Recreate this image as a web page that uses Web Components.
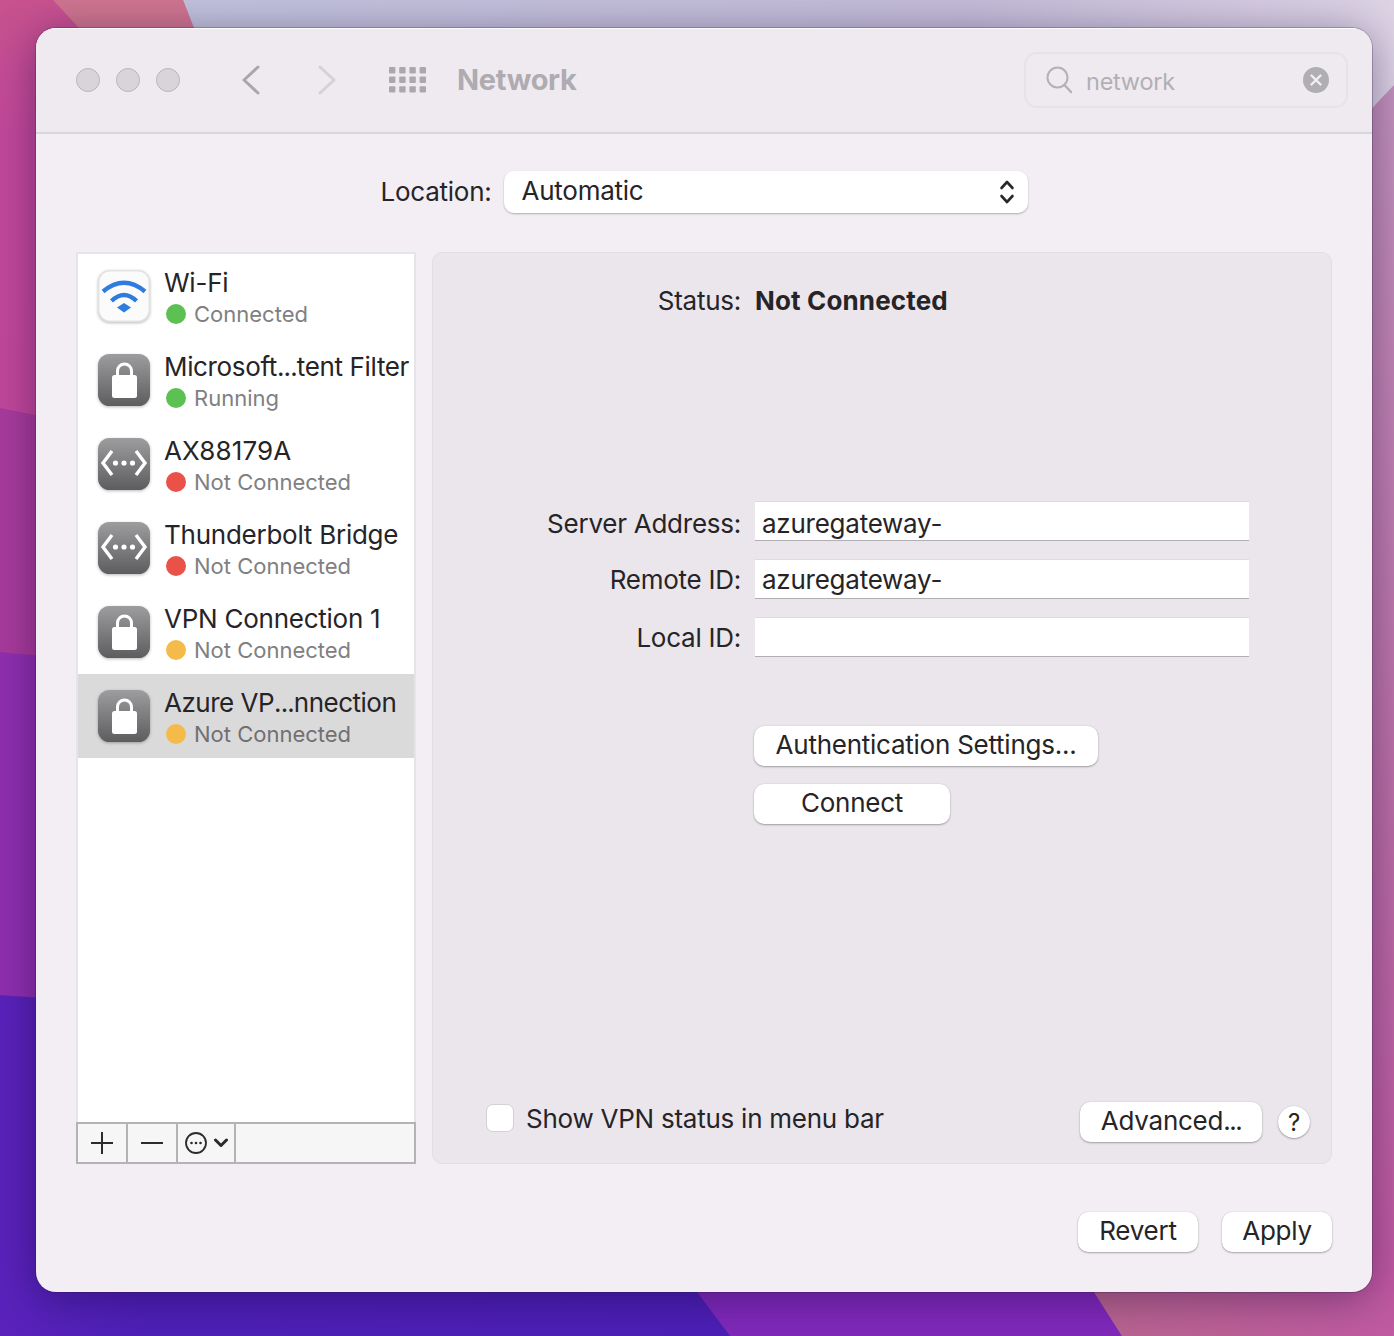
<!DOCTYPE html>
<html>
<head>
<meta charset="utf-8">
<title>Network</title>
<style>
  html, body { margin: 0; padding: 0; }
  body { font-family: Inter, "Liberation Sans", sans-serif; color: #262427; }
  .dots { letter-spacing: -.9px; }
</style>
</head>
<body>
<mac-desktop>
  <prefs-window>
    <prefs-toolbar slot="toolbar">Network</prefs-toolbar>
    <location-picker>Automatic</location-picker>
    <service-list slot="side">
      <service-row icon="wifi" tone="green">Wi-Fi<span slot="status">Connected</span></service-row>
      <service-row icon="lock" tone="green" style="letter-spacing:-.35px">Microsoft<span class="dots">...</span>tent Filter<span slot="status">Running</span></service-row>
      <service-row icon="net" tone="red" style="letter-spacing:.1px">AX88179A<span slot="status">Not Connected</span></service-row>
      <service-row icon="net" tone="red">Thunderbolt Bridge<span slot="status">Not Connected</span></service-row>
      <service-row icon="lock" tone="amber">VPN Connection 1<span slot="status">Not Connected</span></service-row>
      <service-row icon="lock" tone="amber" selected style="letter-spacing:-.5px">Azure VP<span class="dots">...</span>nnection<span slot="status">Not Connected</span></service-row>
    </service-list>
    <vpn-panel slot="main"></vpn-panel>
    <mac-button slot="actions" style="width:120px">Revert</mac-button>
    <mac-button slot="actions" style="width:110px">Apply</mac-button>
  </prefs-window>
</mac-desktop>

<script>
class MacDesktop extends HTMLElement {
  constructor() {
    super();
    this.attachShadow({ mode: 'open' });
  }
  connectedCallback() {
    this.shadowRoot.innerHTML = `
    <style>
      :host { display: block; position: relative; width: 1394px; height: 1336px; overflow: hidden; background: #c0459c; }
      svg { position: absolute; left: 0; top: 0; }
      .frame { position: relative; padding: 28px 22px 44px 36px; }
    </style>
    <svg width="1394" height="1336" viewBox="0 0 1394 1336">
      <defs>
        <linearGradient id="sky" x1="0" x2="1" y1="0" y2="0">
          <stop offset="0" stop-color="#c2c2dd"/><stop offset=".65" stop-color="#c4bcd8"/><stop offset="1" stop-color="#ddd3e5"/>
        </linearGradient>
        <linearGradient id="rightPink" x1="0" x2="0" y1="0" y2="1">
          <stop offset="0" stop-color="#c493bd"/><stop offset=".6" stop-color="#bc6fa6"/><stop offset="1" stop-color="#c058a2"/>
        </linearGradient>
        <linearGradient id="top" x1="0" x2="0" y1="0" y2="1">
          <stop offset="0" stop-color="#c8528f"/><stop offset=".1" stop-color="#c2489b"/><stop offset="1" stop-color="#bf449d"/>
        </linearGradient>
        <linearGradient id="bottomPink" x1="0" x2="1" y1="0" y2="0">
          <stop offset="0" stop-color="#b9658f"/><stop offset="1" stop-color="#c05aa2"/>
        </linearGradient>
        <linearGradient id="deep" x1="0" x2="1" y1="0" y2="0">
          <stop offset="0" stop-color="#5a22bb"/><stop offset=".2" stop-color="#4e20b8"/><stop offset="1" stop-color="#4c1fb6"/>
        </linearGradient>
      </defs>
      <rect width="1394" height="1336" fill="url(#top)"/>
      <path d="M53 0L79 28L194 28L183 0Z" fill="#cf7590"/>
      <path d="M183 0L1394 0L1394 130L194 130L194 28Z" fill="url(#sky)"/>
      <path d="M0 408Q200 450 700 500L700 1336L0 1336Z" fill="#a83b9c"/>
      <path d="M0 652Q200 672 700 700L700 1336L0 1336Z" fill="#8f2fb0"/>
      <path d="M0 995Q200 1010 700 1040L730 1336L0 1336Z" fill="url(#deep)"/>
      <path d="M697 1292L730 1336L1122 1336L1094 1292Z" fill="#8029bb"/>
      <path d="M1094 1292L1122 1336L1394 1336L1394 1292Z" fill="url(#bottomPink)"/>
      <path d="M1300 200Q1345 135 1394 85L1394 1292L1300 1292Z" fill="url(#rightPink)"/>
    </svg>
    <div class="frame"><slot></slot></div>
    `;
  }
}

class PrefsWindow extends HTMLElement {
  constructor() {
    super();
    this.attachShadow({ mode: 'open' });
  }
  connectedCallback() {
    this.shadowRoot.innerHTML = `
    <style>
      :host {
        display: flex;
        flex-direction: column;
        width: 1336px;
        height: 1264px;
        box-sizing: border-box;
        border-radius: 20px;
        background: #f2eef4;
        overflow: hidden;
        letter-spacing: -.25px;
        box-shadow: 0 0 0 1px rgba(40,20,60,.25), 0 6px 44px rgba(20,0,50,.42);
      }
      .top { display: flex; justify-content: center; margin-top: 37px; }
      .columns { display: flex; gap: 16px; margin: 39px 40px 0; height: 912px; }
      .actions { display: flex; justify-content: flex-end; gap: 24px; margin: 48px 40px 0; }
    </style>
    <slot name="toolbar"></slot>
    <div class="top"><slot></slot></div>
    <div class="columns"><slot name="side"></slot><slot name="main"></slot></div>
    <div class="actions"><slot name="actions"></slot></div>
    `;
  }
}

class PrefsToolbar extends HTMLElement {
  constructor() {
    super();
    this.attachShadow({ mode: 'open' });
  }
  connectedCallback() {
    let dots = '';
    for (let r = 0; r < 3; r++) {
      for (let c = 0; c < 4; c++) {
        dots += `<rect x="${c * 10.2}" y="${r * 9.6}" width="6.4" height="6.4" rx="1"/>`;
      }
    }
    this.shadowRoot.innerHTML = `
    <style>
      :host {
        display: flex;
        align-items: center;
        height: 106px;
        box-sizing: border-box;
        padding: 0 24px 0 40px;
        background: #eeeaf0;
        border-bottom: 2px solid #d9d6db;
        box-shadow: inset 0 1px 0 #fbfafc;
      }
      .lights { display: flex; gap: 16px; }
      .lights i { width: 24px; height: 24px; box-sizing: border-box; border-radius: 50%; background: #d8d4da; border: 1px solid #b9b6bb; }
      .back { margin-left: 61px; }
      .forward { margin-left: 56px; }
      .apps { margin-left: 52px; fill: #aaa7ad; }
      .title { margin-left: 31px; margin-bottom: 2px; font: 700 29px Inter, "Liberation Sans", sans-serif; letter-spacing: -.3px; color: #aeabb1; }
      search-box { margin-left: auto; }
    </style>
    <div class="lights"><i></i><i></i><i></i></div>
    <svg class="back" width="20" height="30" viewBox="0 0 20 30"><path d="M17 2L3 15L17 28" fill="none" stroke="#a9a6ac" stroke-width="3" stroke-linecap="round" stroke-linejoin="round"/></svg>
    <svg class="forward" width="20" height="30" viewBox="0 0 20 30"><path d="M3 2L17 15L3 28" fill="none" stroke="#d5d2d7" stroke-width="3" stroke-linecap="round" stroke-linejoin="round"/></svg>
    <svg class="apps" width="37" height="26" viewBox="0 0 37 26">${dots}</svg>
    <span class="title"><slot></slot></span>
    <search-box>network</search-box>
    `;
  }
}

class SearchBox extends HTMLElement {
  constructor() {
    super();
    this.attachShadow({ mode: 'open' });
  }
  connectedCallback() {
    this.shadowRoot.innerHTML = `
    <style>
      :host {
        display: flex;
        align-items: center;
        width: 324px;
        height: 56px;
        box-sizing: border-box;
        padding: 0 17px 0 20px;
        border: 2px solid #e6e3e8;
        border-radius: 13px;
        font: 400 23.5px Inter, "Liberation Sans", sans-serif;
        color: #b2afb4;
      }
      .text { margin-left: 14px; margin-top: 3px; }
      .clear { margin-left: auto; }
    </style>
    <svg width="26" height="28" viewBox="0 0 26 28"><circle cx="11.500" cy="11.500" r="10" fill="none" stroke="#b4b1b6" stroke-width="2"/><path d="M18.500 19L25 26" stroke="#b4b1b6" stroke-width="2.400" stroke-linecap="round"/></svg>
    <span class="text"><slot></slot></span>
    <svg class="clear" width="26" height="26" viewBox="0 0 26 26"><circle cx="13" cy="13" r="13" fill="#b0aeb2"/><path d="M8.500 8.500L17.500 17.500M17.500 8.500L8.500 17.500" stroke="#f2eff3" stroke-width="2.400" stroke-linecap="round"/></svg>
    `;
  }
}

class LocationPicker extends HTMLElement {
  constructor() {
    super();
    this.attachShadow({ mode: 'open' });
  }
  connectedCallback() {
    this.shadowRoot.innerHTML = `
    <style>
      :host { display: flex; align-items: center; gap: 12px; font: 400 26px Inter, "Liberation Sans", sans-serif; color: #262427; }
      .label { padding-bottom: 2px; }
      .popup {
        display: flex;
        align-items: center;
        justify-content: space-between;
        width: 524px;
        height: 42px;
        box-sizing: border-box;
        padding: 0 13px 0 18px;
        border-radius: 10px;
        background: #fff;
        box-shadow: 0 1px 2px rgba(0,0,0,.28);
      }
      .value { padding-bottom: 3px; }
    </style>
    <span class="label">Location:</span>
    <div class="popup">
      <span class="value"><slot></slot></span>
      <svg width="16" height="26" viewBox="0 0 16 26"><path d="M2.500 9L8 3L13.500 9M2.500 17L8 23L13.500 17" fill="none" stroke="#2a282b" stroke-width="2.600" stroke-linecap="round" stroke-linejoin="round"/></svg>
    </div>
    `;
  }
}

class ServiceList extends HTMLElement {
  constructor() {
    super();
    this.attachShadow({ mode: 'open' });
  }
  connectedCallback() {
    this.shadowRoot.innerHTML = `
    <style>
      :host { display: flex; flex-direction: column; width: 340px; flex: none; }
      .rows { flex: 1; background: #fff; border: 2px solid #e7e4e9; border-bottom: 0; }
      .foot { display: flex; height: 42px; box-sizing: border-box; border: 2px solid #b3b3b3; background: #f6f6f6; }
      .foot div { display: flex; align-items: center; justify-content: center; box-sizing: content-box; border-right: 2px solid #b3b3b3; }
      .add, .remove { width: 48px; }
      .more { width: 56px; gap: 7px; }
    </style>
    <div class="rows"><slot></slot></div>
    <div class="foot">
      <div class="add"><svg width="22" height="22" viewBox="0 0 22 22"><path d="M11 0V22M0 11H22" stroke="#2b2a2c" stroke-width="2"/></svg></div>
      <div class="remove"><svg width="22" height="4" viewBox="0 0 22 4"><path d="M0 2H22" stroke="#2b2a2c" stroke-width="2"/></svg></div>
      <div class="more">
        <svg width="22" height="22" viewBox="0 0 22 22"><circle cx="11" cy="11" r="10" fill="none" stroke="#2b2a2c" stroke-width="1.800"/><circle cx="6.500" cy="11" r="1.300" fill="#2b2a2c"/><circle cx="11" cy="11" r="1.300" fill="#2b2a2c"/><circle cx="15.500" cy="11" r="1.300" fill="#2b2a2c"/></svg>
        <svg width="14" height="10" viewBox="0 0 14 10"><path d="M1.500 2L7 7.500L12.500 2" fill="none" stroke="#2b2a2c" stroke-width="3" stroke-linecap="round" stroke-linejoin="round"/></svg>
      </div>
    </div>
    `;
  }
}

const tones = { green: '#5cc152', red: '#ea5148', amber: '#f4bb4a' };

class ServiceRow extends HTMLElement {
  constructor() {
    super();
    this.attachShadow({ mode: 'open' });
  }
  connectedCallback() {
    const tone = tones[this.getAttribute('tone')];
    this.shadowRoot.innerHTML = `
    <style>
      :host {
        display: flex;
        height: 84px;
        box-sizing: border-box;
        padding: 16px 0 0 20px;
        gap: 14px;
        font: 400 26px Inter, "Liberation Sans", sans-serif;
        color: #262427;
      }
      :host([selected]) { background: #dbdadb; }
      .text { min-width: 0; margin-top: -3px; white-space: nowrap; }
      .name { height: 31px; line-height: 31px; }
      .state { display: flex; align-items: center; gap: 8px; height: 31px; margin-left: 2px; font-size: 22px; letter-spacing: 0; color: #808082; }
      .dot { width: 20px; height: 20px; border-radius: 50%; background: ${tone}; }
      :host([selected]) .state { color: #707072; }
    </style>
    <service-icon kind="${this.getAttribute('icon')}"></service-icon>
    <div class="text">
      <div class="name"><slot></slot></div>
      <div class="state"><span class="dot"></span><slot name="status"></slot></div>
    </div>
    `;
  }
}

class ServiceIcon extends HTMLElement {
  constructor() {
    super();
    this.attachShadow({ mode: 'open' });
  }
  connectedCallback() {
    const kind = this.getAttribute('kind');
    const lock = `
      <path d="M19.500 22V17a7 7 0 0 1 14 0V22" fill="none" stroke="#fff" stroke-width="3"/>
      <rect x="14" y="21" width="25" height="23" rx="2.500" fill="#fff"/>`;
    const net = `
      <path d="M14 13L5 25L14 37M38 13L47 25L38 37" fill="none" stroke="#fff" stroke-width="3.400"/>
      <circle cx="17.500" cy="25" r="2.600" fill="#fff"/><circle cx="26" cy="25" r="2.600" fill="#fff"/><circle cx="34.500" cy="25" r="2.600" fill="#fff"/>`;
    const wifi = `
      <path d="M5 21.500Q26 4 47 21.500" fill="none" stroke="#2f7ce0" stroke-width="4.400"/>
      <path d="M13.500 31Q26 19 38.500 31" fill="none" stroke="#2f7ce0" stroke-width="4.400"/>
      <path d="M26 33L33 37.500L26 42.500L19 37.500Z" fill="#2f7ce0"/>`;
    const tile = kind === 'wifi'
      ? '<rect x=".75" y=".75" width="50.500" height="50.500" rx="11" fill="#fbfbfb" stroke="#e3e3e3" stroke-width="1.500"/>'
      : '<rect width="52" height="52" rx="11.500" fill="url(#tile)"/>';
    this.shadowRoot.innerHTML = `
    <style>
      :host { display: block; width: 52px; height: 54px; flex: none; }
      svg { display: block; overflow: visible; filter: drop-shadow(0 1.500px 1.500px rgba(0,0,0,.28)); }
    </style>
    <svg width="52" height="52" viewBox="0 0 52 52">
      <defs><linearGradient id="tile" x1="0" x2="0" y1="0" y2="1"><stop offset="0" stop-color="#9d9d9f"/><stop offset="1" stop-color="#5d5d5f"/></linearGradient></defs>
      ${tile}
      ${kind === 'wifi' ? wifi : kind === 'net' ? net : lock}
    </svg>
    `;
  }
}

class MacButton extends HTMLElement {
  constructor() {
    super();
    this.attachShadow({ mode: 'open' });
  }
  connectedCallback() {
    this.shadowRoot.innerHTML = `
    <style>
      :host {
        display: flex;
        align-items: center;
        justify-content: center;
        height: 40px;
        box-sizing: border-box;
        padding-bottom: 4px;
        border-radius: 10px;
        background: #fff;
        font: 400 26px Inter, "Liberation Sans", sans-serif;
        color: #262427;
        white-space: nowrap;
        box-shadow: 0 1px 2px rgba(0,0,0,.3), 0 0 1px rgba(0,0,0,.2);
      }
    </style>
    <slot></slot>
    `;
  }
}

class FormRow extends HTMLElement {
  constructor() {
    super();
    this.attachShadow({ mode: 'open' });
  }
  connectedCallback() {
    this.shadowRoot.innerHTML = `
    <style>
      :host {
        display: grid;
        grid-template-columns: 308px 494px;
        column-gap: 14px;
        align-items: center;
        height: 40px;
        font: 400 26px Inter, "Liberation Sans", sans-serif;
        color: #262427;
      }
      .label { text-align: right; }
      :host([low]) .label { padding-top: 4px; }
      :host([high]) { margin-top: -1px; margin-bottom: 1px; }
    </style>
    <span class="label">${this.getAttribute('label')}</span>
    <div><slot></slot></div>
    `;
  }
}

class TextField extends HTMLElement {
  constructor() {
    super();
    this.attachShadow({ mode: 'open' });
  }
  connectedCallback() {
    const clip = this.getAttribute('clip');
    this.shadowRoot.innerHTML = `
    <style>
      :host {
        display: flex;
        align-items: center;
        height: 40px;
        box-sizing: border-box;
        padding: 0 7px;
        background: #fff;
        border-top: 1px solid #dedbe0;
        border-bottom: 1px solid #b1afb3;
      }
      :host([clip]) { padding-top: 4px; }
      span { display: block; overflow: hidden; white-space: nowrap; ${clip ? `width: ${clip}px;` : ''} }
    </style>
    <span><slot></slot></span>
    `;
  }
}

class VpnPanel extends HTMLElement {
  constructor() {
    super();
    this.attachShadow({ mode: 'open' });
  }
  connectedCallback() {
    this.shadowRoot.innerHTML = `
    <style>
      :host {
        display: flex;
        flex-direction: column;
        width: 900px;
        flex: none;
        box-sizing: border-box;
        padding-top: 28px;
        background: #eae6ec;
        border: 1px solid #e2dfe4;
        border-radius: 10px;
        font: 400 26px Inter, "Liberation Sans", sans-serif;
        color: #262427;
      }
      b { font-weight: 700; letter-spacing: .15px; }
      .dots { letter-spacing: -1.500px; }
      .fields { display: flex; flex-direction: column; gap: 18px; margin-top: 180px; }
      .buttons { display: flex; flex-direction: column; gap: 18px; margin: 69px 0 0 321px; }
      .bottom { display: flex; align-items: center; margin-top: auto; padding: 0 21px 21px 53px; }
      .check { display: flex; align-items: center; gap: 12px; align-self: flex-start; margin-top: 2px; height: 28px; }
      .box { width: 28px; height: 28px; box-sizing: border-box; border-radius: 7px; background: #fff; border: 1px solid #d3d1d5; }
      .help {
        display: flex;
        align-items: center;
        justify-content: center;
        width: 32px;
        height: 32px;
        margin-left: 16px;
        border-radius: 50%;
        background: #fff;
        font-size: 24px;
        box-shadow: 0 1px 2px rgba(0,0,0,.3), 0 0 1px rgba(0,0,0,.2);
      }
    </style>
    <form-row label="Status:" high><b>Not Connected</b></form-row>
    <div class="fields">
      <form-row label="Server Address:" low><text-field clip="180">azuregateway-</text-field></form-row>
      <form-row label="Remote ID:"><text-field>azuregateway-</text-field></form-row>
      <form-row label="Local ID:"><text-field></text-field></form-row>
    </div>
    <div class="buttons">
      <mac-button style="width:344px">Authentication Settings...</mac-button>
      <mac-button style="width:196px">Connect</mac-button>
    </div>
    <div class="bottom">
      <div class="check"><span class="box"></span><span>Show VPN status in menu bar</span></div>
      <mac-button style="width:182px; margin-left:auto">Advanced<span class="dots">...</span></mac-button>
      <span class="help">?</span>
    </div>
    `;
  }
}

customElements.define('mac-desktop', MacDesktop);
customElements.define('prefs-window', PrefsWindow);
customElements.define('prefs-toolbar', PrefsToolbar);
customElements.define('search-box', SearchBox);
customElements.define('location-picker', LocationPicker);
customElements.define('service-list', ServiceList);
customElements.define('service-row', ServiceRow);
customElements.define('service-icon', ServiceIcon);
customElements.define('mac-button', MacButton);
customElements.define('form-row', FormRow);
customElements.define('text-field', TextField);
customElements.define('vpn-panel', VpnPanel);
</script>
</body>
</html>
